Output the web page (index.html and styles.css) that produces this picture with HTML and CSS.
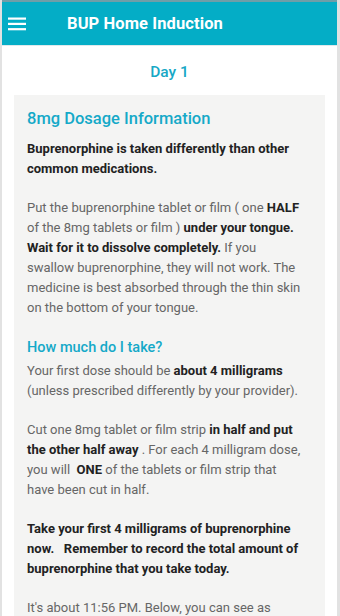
FILE: index.html
```html
<!DOCTYPE html>
<html>
<head>
<meta charset="utf-8">
<link rel="stylesheet" href="styles.css">
</head>
<body>
<div class="screen">
  <header class="appbar">
    <svg class="menu" width="18" height="14" viewBox="0 0 18 14">
      <rect x="0" y="0.5" width="18" height="2.2" fill="#fff"/>
      <rect x="0" y="5.8" width="18" height="2.2" fill="#fff"/>
      <rect x="0" y="11.1" width="18" height="2.2" fill="#fff"/>
    </svg>
    <h1 class="title">BUP Home Induction</h1>
  </header>
  <main class="content">
    <h2 class="day">Day 1</h2>
    <section class="card">
      <h3 class="card-title">8mg Dosage Information</h3>
      <p class="para"><b>Buprenorphine is taken differently than other common medications.</b></p>
      <p class="para">Put the buprenorphine tablet or film ( one <b>HALF</b> of the 8mg tablets or film ) <b>under your tongue. Wait for it to dissolve completely.</b> If you swallow buprenorphine, they will not work. The medicine is best absorbed through the thin skin on the bottom of your tongue.</p>
      <h4 class="sub-title">How much do I take?</h4>
      <p class="para">Your first dose should be <b>about 4 milligrams</b> (unless prescribed differently by your provider).</p>
      <p class="para">Cut one 8mg tablet or film strip <b>in half and put the other half away</b> . For each 4 milligram dose, you will &nbsp;<b>ONE</b> of the tablets or film strip that have been cut in half.</p>
      <p class="para"><b>Take your first 4 milligrams of buprenorphine now. &nbsp; Remember to record the total amount of buprenorphine that you take today.</b></p>
      <p class="para">It's about 11:56 PM. Below, you can see as</p>
    </section>
  </main>
</div>
</body>
</html>
```
FILE: styles.css
```css
html, body {
  margin: 0;
  padding: 0;
  background: #ffffff;
}
body {
  font-family: Roboto, "Noto Sans", sans-serif;
  width: 340px;
  height: 616px;
  overflow: hidden;
}
.screen {
  height: 616px;
  border-left: 2px solid #e2e2e2;
  border-right: 3px solid #e2e2e2;
  box-sizing: border-box;
  overflow: hidden;
}
.appbar {
  height: 46px;
  box-sizing: border-box;
  border-top: 2px solid #6f9ea8;
  border-bottom: 1px solid #dfe9ec;
  background: #04adc6;
  display: flex;
  align-items: center;
  margin-left: -2px;
  margin-right: -3px;
  padding-left: 8px;
}
.menu {
  display: block;
  margin-top: 1px;
}
.title {
  margin: 0 0 0 41px;
  color: #fff;
  font-size: 16.5px;
  font-weight: 700;
  letter-spacing: 0.1px;
}
.content {
  padding: 0 12px 0 12px;
}
.day {
  margin: 0;
  padding-top: 15px;
  height: 49px;
  box-sizing: border-box;
  text-align: center;
  color: #17a8c6;
  font-size: 15.5px;
  font-weight: 500;
  line-height: 22px;
}
.card {
  background: #f4f4f3;
  padding: 12px 20px 10px 13px;
}
.card-title {
  margin: 0 0 8px 0;
  color: #15a9c8;
  font-size: 16.5px;
  font-weight: 500;
  line-height: 24px;
}
.sub-title {
  margin: 0 0 2px 0;
  color: #15a9c8;
  font-size: 14.5px;
  font-weight: 500;
  line-height: 22px;
}
.para {
  margin: 0 0 19px 0;
  color: #666;
  font-size: 13px;
  line-height: 20px;
}
.para b {
  color: #222;
  font-weight: 700;
}
```
